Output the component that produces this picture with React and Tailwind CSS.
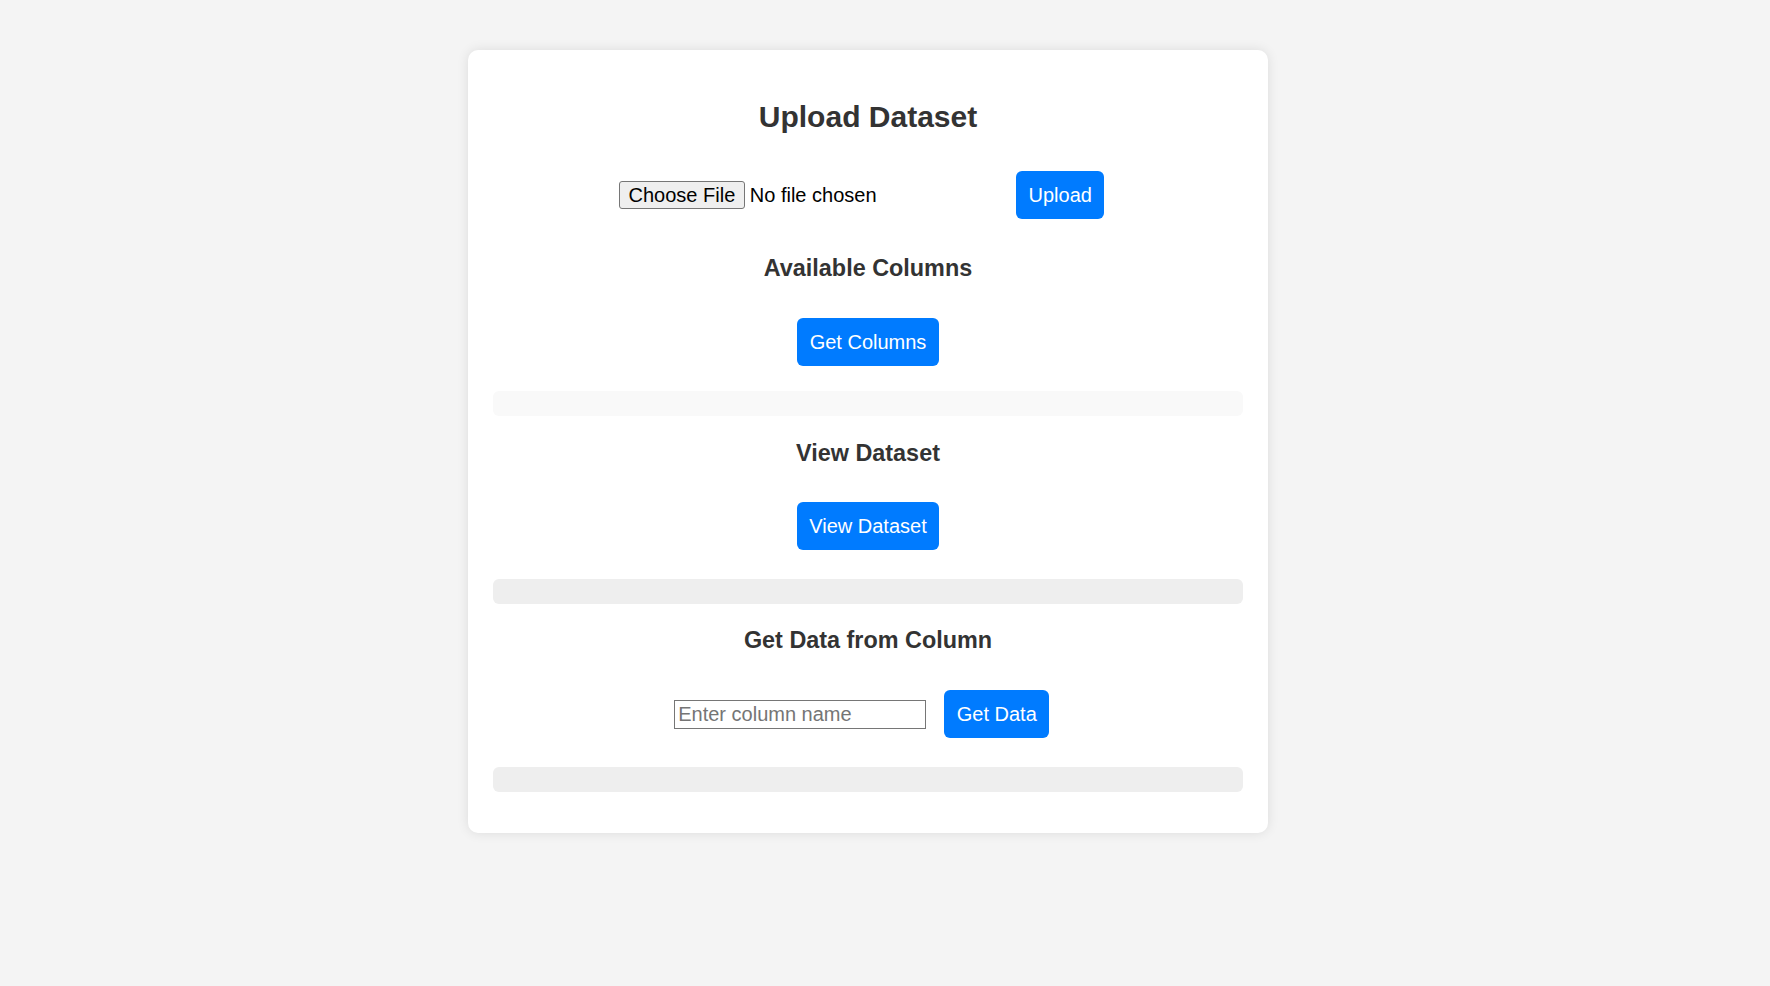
const btn =
  'rounded-[6px] bg-[#007bff] px-[12.5px] h-[48px] text-[20px] leading-[23px] text-white';

const Heading = ({ children, className = '' }) => (
  <h3 className={`text-center text-[23.4px] leading-[27px] font-bold text-[#333] ${className}`}>
    {children}
  </h3>
);

const App = () => {
  return (
    <div className="min-h-screen bg-[#f4f4f4] pt-[50px] pb-[50px] font-['Liberation_Sans',Arial,sans-serif]">
      <div className="ml-[468px] w-[800px] rounded-[10px] bg-white px-[25px] pt-[25px] pb-[41px] shadow-[0_0_12px_rgba(0,0,0,0.1)]">
        <h2 className="mt-[25px] text-center text-[30px] leading-[34px] font-bold text-[#333]">
          Upload Dataset
        </h2>

        <div className="mt-[37px] flex items-center justify-center pr-[12.5px]">
          <div className="flex w-[379px] items-center">
            <button className="h-[28px] rounded-[3px] border border-[#767676] bg-[#efefef] px-[8.5px] text-[20px] leading-[23px] text-black">
              Choose File
            </button>
            <span className="ml-[5px] text-[20px] leading-[23px] text-black">No file chosen</span>
          </div>
          <button className={`ml-[18px] ${btn}`}>Upload</button>
        </div>

        <Heading className="mt-[36px]">Available Columns</Heading>
        <div className="mt-[36px] flex justify-center">
          <button className={btn}>Get Columns</button>
        </div>
        <div className="mt-[25px] h-[25px] rounded-[6px] bg-[#f9f9f9]"></div>

        <Heading className="mt-[24px]">View Dataset</Heading>
        <div className="mt-[35px] flex justify-center">
          <button className={btn}>View Dataset</button>
        </div>
        <div className="mt-[29px] h-[25px] rounded-[6px] bg-[#eeeeee]"></div>

        <Heading className="mt-[23px]">Get Data from Column</Heading>
        <div className="mt-[36px] flex items-center justify-center pr-[12.5px]">
          <input
            type="text"
            placeholder="Enter column name"
            className="h-[29px] w-[252px] border border-[#767676] px-[3px] text-[20px] leading-[23px] text-black placeholder:text-[#757575] outline-none"
          />
          <button className={`ml-[18px] ${btn}`}>Get Data</button>
        </div>
        <div className="mt-[29px] h-[25px] rounded-[6px] bg-[#eeeeee]"></div>
      </div>
    </div>
  );
};

export default App;
